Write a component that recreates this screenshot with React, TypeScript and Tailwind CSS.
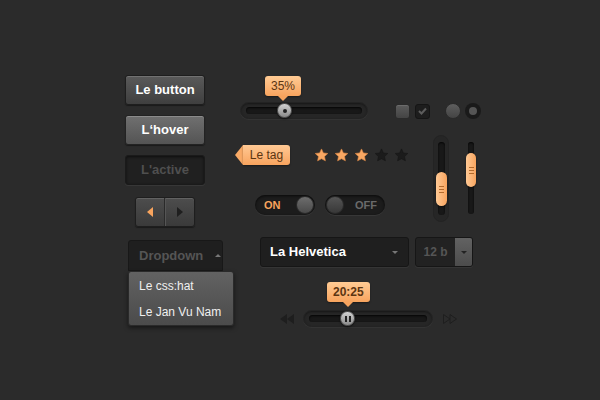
import React from 'react';

const font = { fontFamily: '"Liberation Sans", Arial, sans-serif' };

const Star = ({ on }: { on: boolean }) => (
  <svg width="15" height="14" viewBox="0 0 24 23">
    <path
      d="M12 1.5l3.1 6.6 7.2.9-5.3 5 1.4 7.1L12 17.6l-6.4 3.5 1.4-7.1-5.3-5 7.2-.9z"
      fill={on ? '#f9a863' : '#1b1b1b'}
      stroke={on ? '#e08a45' : '#161616'}
      strokeWidth="1"
      strokeLinejoin="round"
    />
  </svg>
);

const Tip: React.FC<{ children: React.ReactNode; className?: string; bold?: boolean }> = ({ children, className, bold }) => (
  <div className={`absolute flex flex-col items-center ${className ?? ''}`}>
    <div className={`px-[6px] h-[20px] flex items-center rounded-[3px] bg-gradient-to-b from-[#ffcb94] to-[#f8a45e] text-[#5b3512] text-[12px] shadow-[0_1px_2px_rgba(0,0,0,0.4)] ${bold ? 'font-bold' : 'font-normal'}`}>
      {children}
    </div>
    <div className="w-0 h-0 border-x-[5px] border-x-transparent border-t-[5px] border-t-[#f8a45e]" />
  </div>
);

const Knob: React.FC<{ pause?: boolean }> = ({ pause }) => (
  <div className="w-[15px] h-[15px] rounded-full bg-gradient-to-b from-[#d2d2d2] to-[#8a8a8a] border border-[#555] flex items-center justify-center shadow-[0_1px_2px_rgba(0,0,0,0.6)]">
    {pause ? (
      <div className="flex gap-[2px]">
        <div className="w-[2px] h-[6px] bg-[#222]" />
        <div className="w-[2px] h-[6px] bg-[#222]" />
      </div>
    ) : (
      <div className="w-[4px] h-[4px] rounded-full bg-[#222]" />
    )}
  </div>
);

const Grip = () => (
  <div className="flex flex-col gap-[2px] items-center">
    <div className="w-[5px] h-px bg-[#b36a2c]" />
    <div className="w-[5px] h-px bg-[#b36a2c]" />
    <div className="w-[5px] h-px bg-[#b36a2c]" />
  </div>
);

export default function App() {
  return (
    <div style={font} className="w-[600px] h-[400px] bg-[#2b2b2b] flex pl-[125px] pt-[75px] overflow-hidden">
      {/* left column */}
      <div className="w-[110px] flex flex-col items-start">
        <button className="w-[80px] h-[30px] rounded-[3px] border border-[#1e1e1e] bg-gradient-to-b from-[#5a5a5a] to-[#3f3f3f] text-white text-[13px] font-bold shadow-[inset_0_1px_0_rgba(255,255,255,0.15),0_1px_1px_rgba(0,0,0,0.4)]">
          Le button
        </button>
        <button className="mt-[10px] w-[80px] h-[30px] rounded-[3px] border border-[#232323] bg-gradient-to-b from-[#707070] to-[#545454] text-white text-[13px] font-bold shadow-[inset_0_1px_0_rgba(255,255,255,0.2),0_1px_1px_rgba(0,0,0,0.4)]">
          L‘hover
        </button>
        <button className="mt-[10px] w-[80px] h-[30px] rounded-[3px] border border-[#1a1a1a] bg-[#202020] text-[#4f4f4f] text-[13px] font-bold shadow-[inset_0_1px_3px_rgba(0,0,0,0.6),0_1px_0_rgba(255,255,255,0.06)]">
          L'active
        </button>
        <div className="mt-[12px] ml-[10px] w-[60px] h-[30px] flex rounded-[3px] border border-[#1e1e1e] bg-gradient-to-b from-[#4d4d4d] to-[#3a3a3a] shadow-[inset_0_1px_0_rgba(255,255,255,0.12),0_1px_1px_rgba(0,0,0,0.4)]">
          <div className="flex-1 flex items-center justify-center border-r border-[#2a2a2a]">
            <div className="w-0 h-0 border-y-[5px] border-y-transparent border-r-[6px] border-r-[#f8a45e]" />
          </div>
          <div className="flex-1 flex items-center justify-center border-l border-[#555]">
            <div className="w-0 h-0 border-y-[5px] border-y-transparent border-l-[6px] border-l-[#1f1f1f]" />
          </div>
        </div>
        <div className="mt-[13px] ml-[3px] w-[95px] h-[31px] rounded-t-[3px] border border-[#181818] bg-[#1f1f1f] flex items-center pl-[10px] text-[#555] text-[13px] font-bold">
          Dropdown
          <div className="ml-[12px] w-0 h-0 border-x-[3px] border-x-transparent border-b-[3px] border-b-[#777]" />
        </div>
        <div className="ml-[3px] w-[106px] rounded-[3px] border border-[#2a2a2a] bg-gradient-to-b from-[#626262] to-[#4b4b4b] text-[#f0f0f0] text-[12px] py-[6px] pl-[10px] shadow-[0_2px_4px_rgba(0,0,0,0.5)]">
          <div className="h-[15px] flex items-center">Le css:hat</div>
          <div className="mt-[11px] h-[15px] flex items-center">Le Jan Vu Nam</div>
        </div>
      </div>

      {/* right area */}
      <div className="flex flex-col">
        <div className="flex">
          {/* middle column */}
          <div className="w-[160px] flex flex-col">
            <div className="relative mt-[27px] ml-[5px] w-[128px] h-[17px] rounded-full bg-[#262626] border border-[#232323] shadow-[inset_0_1px_2px_rgba(0,0,0,0.4),0_1px_0_rgba(255,255,255,0.04)] flex items-center px-[5px]">
              <div className="relative flex-1 h-[7px] rounded-full bg-[#181818] shadow-[inset_0_1px_2px_rgba(0,0,0,0.8)]">
                <div className="absolute left-[31px] top-[-4px]">
                  <Knob />
                </div>
              </div>
              <Tip className="left-[24px] top-[-27px]">35%</Tip>
            </div>

            <div className="mt-[26px] flex items-center">
              <div className="flex items-center">
                <div className="w-0 h-0 border-y-[10px] border-y-transparent border-r-[8px] border-r-[#f9aa66]" />
                <div className="w-[47px] h-[20px] rounded-r-[3px] bg-gradient-to-b from-[#ffc994] to-[#f8a45e] text-[#5b3512] text-[12px] flex items-center justify-center shadow-[0_1px_2px_rgba(0,0,0,0.4)]">
                  Le tag
                </div>
              </div>
              <div className="ml-[24px] flex gap-[5px]">
                <Star on />
                <Star on />
                <Star on />
                <Star on={false} />
                <Star on={false} />
              </div>
            </div>

            <div className="mt-[30px] ml-[20px] flex gap-[10px]">
              <div className="w-[60px] h-[20px] rounded-full bg-[#1c1c1c] shadow-[inset_0_1px_3px_rgba(0,0,0,0.7),0_1px_0_rgba(255,255,255,0.06)] flex items-center justify-between pl-[9px] pr-[1px]">
                <span className="text-[#f8a45e] text-[11px] font-bold">ON</span>
                <div className="w-[18px] h-[18px] rounded-full bg-gradient-to-b from-[#6d6d6d] to-[#4a4a4a] border border-[#2a2a2a]" />
              </div>
              <div className="w-[60px] h-[20px] rounded-full bg-[#1c1c1c] shadow-[inset_0_1px_3px_rgba(0,0,0,0.7),0_1px_0_rgba(255,255,255,0.06)] flex items-center justify-between pl-[1px] pr-[8px]">
                <div className="w-[18px] h-[18px] rounded-full bg-gradient-to-b from-[#555] to-[#383838] border border-[#2a2a2a]" />
                <span className="text-[#6a6a6a] text-[11px] font-bold">OFF</span>
              </div>
            </div>
          </div>

          {/* right column */}
          <div className="flex flex-col">
            <div className="mt-[28px] flex items-center">
              <div className="w-[15px] h-[15px] rounded-[3px] bg-gradient-to-b from-[#5c5c5c] to-[#444] border border-[#2a2a2a] shadow-[inset_0_1px_0_rgba(255,255,255,0.1)]" />
              <div className="ml-[5px] w-[15px] h-[15px] rounded-[3px] bg-[#1d1d1d] border border-[#151515] flex items-center justify-center">
                <svg width="9" height="8" viewBox="0 0 9 8">
                  <path d="M1 4l2.5 2.5L8 1.5" stroke="#5c5c5c" strokeWidth="2" fill="none" />
                </svg>
              </div>
              <div className="ml-[15px] w-[16px] h-[16px] rounded-full bg-gradient-to-b from-[#5e5e5e] to-[#444] border border-[#2a2a2a]" />
              <div className="ml-[4px] w-[16px] h-[16px] rounded-full bg-[#1a1a1a] flex items-center justify-center">
                <div className="w-[8px] h-[8px] rounded-full bg-[#555]" />
              </div>
            </div>

            <div className="mt-[16px] ml-[38px] flex items-start">
              <div className="w-[16px] h-[87px] rounded-full bg-[#262626] border border-[#232323] flex justify-center py-[6px]">
                <div className="relative w-[7px] h-full rounded-full bg-[#181818] shadow-[inset_0_1px_2px_rgba(0,0,0,0.8)]">
                  <div className="absolute left-[-2px] top-[30px] w-[11px] h-[34px] rounded-full bg-gradient-to-r from-[#ffc994] to-[#f8a45e] flex items-center justify-center shadow-[0_1px_2px_rgba(0,0,0,0.5)]">
                    <Grip />
                  </div>
                </div>
              </div>
              <div className="ml-[19px] mt-[7px] relative w-[6px] h-[72px] rounded-full bg-[#181818] shadow-[inset_0_1px_2px_rgba(0,0,0,0.8)]">
                <div className="absolute left-[-2px] top-[11px] w-[10px] h-[34px] rounded-full bg-gradient-to-r from-[#ffc994] to-[#f8a45e] flex items-center justify-center shadow-[0_1px_2px_rgba(0,0,0,0.5)]">
                  <Grip />
                </div>
              </div>
            </div>
          </div>
        </div>

        {/* selects */}
        <div className="mt-[15px] ml-[25px] flex gap-[6px]">
          <div className="w-[149px] h-[30px] rounded-[3px] bg-[#1f1f1f] border border-[#161616] shadow-[0_1px_0_rgba(255,255,255,0.05)] flex items-center justify-between pl-[9px] pr-[10px]">
            <span className="text-white text-[13px] font-bold">La Helvetica</span>
            <div className="w-0 h-0 border-x-[3px] border-x-transparent border-t-[3px] border-t-[#777]" />
          </div>
          <div className="w-[58px] h-[30px] rounded-[3px] bg-[#222] border border-[#161616] shadow-[0_1px_0_rgba(255,255,255,0.05)] flex overflow-hidden">
            <span className="flex-1 flex items-center justify-center text-[#555] text-[12px] font-bold">12 b</span>
            <div className="w-[17px] h-full bg-gradient-to-b from-[#626262] to-[#4c4c4c] flex items-center justify-center">
              <div className="w-0 h-0 border-x-[3px] border-x-transparent border-t-[3px] border-t-[#222]" />
            </div>
          </div>
        </div>

        {/* player */}
        <div className="mt-[43px] ml-[45px] flex items-center">
          <svg width="14" height="10" viewBox="0 0 14 10">
            <path d="M7 0v10L0 5z M14 0v10L7 5z" fill="#1e1e1e" />
          </svg>
          <div className="relative ml-[9px] w-[130px] h-[17px] rounded-full bg-[#262626] border border-[#232323] shadow-[inset_0_1px_2px_rgba(0,0,0,0.4),0_1px_0_rgba(255,255,255,0.04)] flex items-center px-[5px]">
            <div className="relative flex-1 h-[7px] rounded-full bg-[#181818] shadow-[inset_0_1px_2px_rgba(0,0,0,0.8)]">
              <div className="absolute left-[31px] top-[-4px]">
                <Knob pause />
              </div>
            </div>
            <Tip bold className="left-[23px] top-[-29px]">20:25</Tip>
          </div>
          <svg className="ml-[10px]" width="14" height="10" viewBox="0 0 14 10">
            <path d="M0.5 0.5v9l6.5-4.5z M7 0.5v9l6.5-4.5z" fill="none" stroke="#1e1e1e" strokeWidth="1" />
          </svg>
        </div>
      </div>
    </div>
  );
}
